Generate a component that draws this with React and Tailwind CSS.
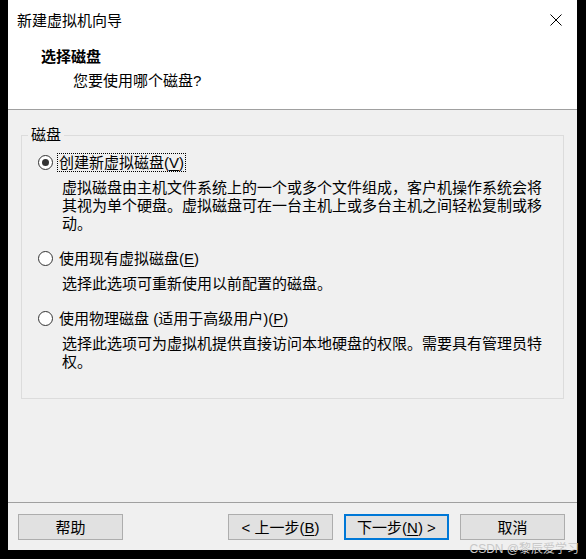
import React from 'react'

const Radio = ({ checked }) => (
  <span className="flex h-[15px] w-[15px] shrink-0 items-center justify-center rounded-full border border-[#333333] bg-white">
    {checked && <span className="h-[7px] w-[7px] rounded-full bg-[#333333]"></span>}
  </span>
)

const Option = ({ checked, label, mnemonic, focused, lines, className }) => (
  <div className={className}>
    <div className="flex items-center">
      <Radio checked={checked} />
      <span className={`ml-[4px] px-[1px] leading-[17px] ${focused ? 'border border-dotted border-black' : 'border border-transparent'}`}>
        {label}(<span className="underline underline-offset-2">{mnemonic}</span>)
      </span>
    </div>
    <div className="mt-[7px] pl-[24px] leading-[18px]">
      {lines.map((line, i) => (
        <div key={i} className="whitespace-nowrap">{line}</div>
      ))}
    </div>
  </div>
)

const Button = ({ children, primary }) => (
  <button
    className={`flex h-[26px] w-[105px] items-center justify-center bg-[#e1e1e1] text-[15px] leading-none text-black ${
      primary ? 'border-2 border-[#0078d7]' : 'border border-[#adadad]'
    }`}
  >
    {children}
  </button>
)

export default function App() {
  return (
    <div className="relative h-[559px] w-[586px] overflow-hidden bg-black pl-[8px] pr-[9px] pb-[9px] font-['Liberation_Sans','Noto_Sans_CJK_SC',sans-serif] text-[15px] text-black">
      <div className="flex h-[550px] w-[569px] flex-col bg-[#f0f0f0]">
        {/* header */}
        <div className="h-[109px] bg-white">
          <div className="flex h-[40px] items-center justify-between pl-[9px] pr-[15px]">
            <span className="leading-none">新建虚拟机向导</span>
            <svg width="12" height="12" viewBox="0 0 12 12" className="shrink-0">
              <path d="M0.5 0.5 L11.5 11.5 M11.5 0.5 L0.5 11.5" stroke="#000" strokeWidth="1" fill="none" />
            </svg>
          </div>
          <div className="mt-[8px] pl-[33px] font-bold leading-[18px]">选择磁盘</div>
          <div className="mt-[6px] pl-[65px] leading-[18px]">您要使用哪个磁盘?</div>
        </div>
        <div className="h-px bg-[#a0a0a0]"></div>

        {/* body */}
        <div className="flex-1 px-[13px]">
          <fieldset className="mt-[15px] h-[274px] border border-[#dcdcdc]">
            <legend className="ml-[6px] px-[3px] leading-[20px]">磁盘</legend>
            <div className="pl-[16px]">
              <Option
                className="mt-[8px]"
                checked
                focused
                label="创建新虚拟磁盘"
                mnemonic="V"
                lines={[
                  '虚拟磁盘由主机文件系统上的一个或多个文件组成，客户机操作系统会将',
                  '其视为单个硬盘。虚拟磁盘可在一台主机上或多台主机之间轻松复制或移',
                  '动。',
                ]}
              />
              <Option
                className="mt-[16px]"
                label="使用现有虚拟磁盘"
                mnemonic="E"
                lines={['选择此选项可重新使用以前配置的磁盘。']}
              />
              <Option
                className="mt-[16px]"
                label="使用物理磁盘 (适用于高级用户)"
                mnemonic="P"
                lines={['选择此选项可为虚拟机提供直接访问本地硬盘的权限。需要具有管理员特', '权。']}
              />
            </div>
          </fieldset>
        </div>

        {/* footer */}
        <div className="h-px bg-[#a0a0a0]"></div>
        <div className="flex h-[47px] items-start pl-[10px] pr-[12px] pt-[11px]">
          <Button>帮助</Button>
          <div className="ml-auto flex gap-[11px]">
            <Button>
              &lt; 上一步(<span className="underline underline-offset-2">B</span>)
            </Button>
            <Button primary>
              下一步(<span className="underline underline-offset-2">N</span>) &gt;
            </Button>
            <Button>取消</Button>
          </div>
        </div>
      </div>

      <div className="absolute bottom-[4px] right-[7px] text-[12px] leading-none text-[#c8c8c8]">CSDN @黎辰爱学习</div>
    </div>
  )
}
